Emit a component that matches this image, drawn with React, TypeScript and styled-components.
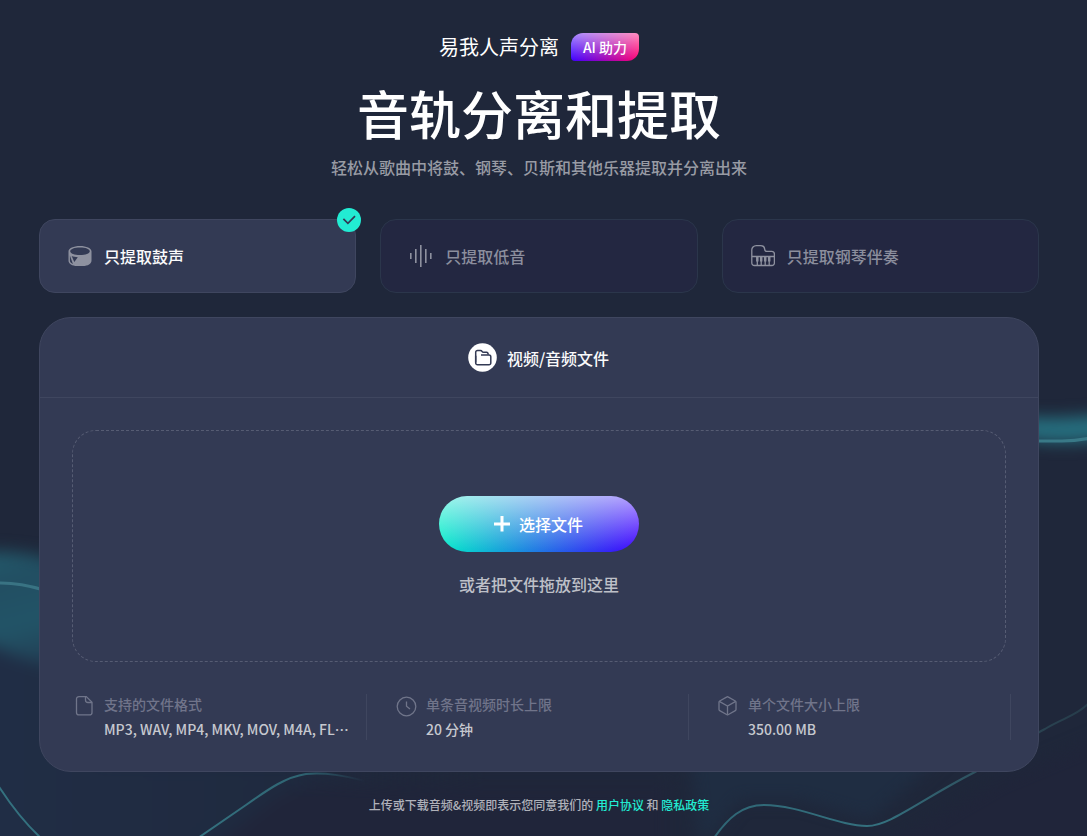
import React, { useState } from "react";
import styled, { createGlobalStyle } from "styled-components";

const GlobalStyle = createGlobalStyle`
  *, *::before, *::after { box-sizing: border-box; }
  html, body { margin: 0; padding: 0; background: #1f273a; }
  body {
    font-family: "Noto Sans CJK SC", "Noto Sans", sans-serif;
    color: #fff;
  }
  h1, h2, p, dl, dt, dd, fieldset { margin: 0; padding: 0; border: 0; font-weight: inherit; }
  button { font-family: inherit; }
`;

const Page = styled.div`
  position: relative;
  min-height: 100vh;
  overflow: hidden;
  padding: 32px 9px 16px 0;
`;

const Backdrop = styled.svg`
  position: absolute;
  inset: 0;
  width: 100%;
  height: 100%;
`;

const Main = styled.main`
  position: relative;
  width: calc(100% - 32px);
  max-width: 1000px;
  margin: 0 auto;
`;

const Header = styled.header`
  display: flex;
  flex-direction: column;
  align-items: center;
  text-align: center;
`;

const Brand = styled.div`
  display: flex;
  align-items: center;
  gap: 12px;
  font-size: 20px;
  line-height: 30px;
`;

const Badge = styled.span`
  padding: 0 12px;
  border-radius: 12px 4px 12px 4px;
  font-size: 14px;
  font-weight: 500;
  line-height: 28px;
  background:
    linear-gradient(180deg, rgba(255, 255, 255, 0.56), rgba(255, 255, 255, 0)),
    linear-gradient(90deg, #3d00ff, #ff0070);
`;

const Title = styled.h1`
  margin-top: 16px;
  font-size: 52px;
  font-weight: 500;
  line-height: 70px;
`;

const Subtitle = styled.p`
  margin-top: 7px;
  font-size: 16px;
  font-weight: 500;
  line-height: 24px;
  color: #989ba4;
`;

const Modes = styled.fieldset`
  display: grid;
  grid-template-columns: repeat(3, 1fr);
  gap: 24px;
  margin-top: 40px;
  min-width: 0;
`;

const ModeCard = styled.label<{ $active: boolean }>`
  position: relative;
  display: flex;
  align-items: center;
  gap: 12px;
  height: 74px;
  padding: 0 28px;
  border: 1px solid ${(p) => (p.$active ? "#3f465f" : "#2b364b")};
  border-radius: 16px;
  background: ${(p) => (p.$active ? "#333a54" : "#232741")};
  color: ${(p) => (p.$active ? "#fafafb" : "#8b8e9d")};
  font-size: 16px;
  font-weight: 500;
  line-height: 24px;
  cursor: pointer;
`;

const HiddenRadio = styled.input`
  position: absolute;
  inset: 0;
  width: 100%;
  height: 100%;
  margin: 0;
  opacity: 0;
  cursor: pointer;
`;

const ModeIcon = styled.svg`
  flex: none;
  width: 24px;
  height: 24px;
  color: #8e919f;
`;

const Check = styled.svg`
  position: absolute;
  top: -12px;
  right: -6px;
  width: 24px;
  height: 24px;
`;

const Panel = styled.section`
  margin-top: 24px;
  padding-bottom: 31px;
  border: 1px solid #3f465f;
  border-radius: 32px;
  background: #333a54;
`;

const PanelHead = styled.div`
  display: flex;
  align-items: center;
  justify-content: center;
  gap: 10px;
  height: 80px;
  padding-right: 1px;
  border-bottom: 1px solid #3f465f;
`;

const PanelTitle = styled.h2`
  font-size: 16px;
  font-weight: 500;
  line-height: 24px;
  color: #fafafb;
`;

const DropZone = styled.div`
  display: flex;
  flex-direction: column;
  align-items: center;
  justify-content: center;
  gap: 20px;
  min-height: 232px;
  margin: 32px;
  border: 1px dashed #565c73;
  border-radius: 24px;
`;

const PickButton = styled.button`
  display: flex;
  align-items: center;
  justify-content: center;
  gap: 8px;
  width: 200px;
  height: 56px;
  padding: 0 2px 0 0;
  border: 0;
  border-radius: 28px;
  color: #fff;
  font-size: 16px;
  font-weight: 500;
  line-height: 24px;
  cursor: pointer;
  background:
    linear-gradient(180deg, rgba(255, 255, 255, 0.62), rgba(255, 255, 255, 0)),
    linear-gradient(90deg, #00ecc8, #3d00ff);
`;

const DropHint = styled.p`
  font-size: 16px;
  font-weight: 500;
  line-height: 24px;
  color: #bec0c8;
`;

const Limits = styled.dl`
  display: grid;
  grid-template-columns: repeat(3, 1fr);
  gap: 27px;
  padding: 0 27px 0 32px;
`;

const Limit = styled.div`
  display: grid;
  grid-template-columns: 24px minmax(0, 1fr);
  column-gap: 8px;
  row-gap: 4px;
  padding-right: 16px;
  border-right: 1px solid #3f465f;
`;

const LimitIcon = styled.svg`
  grid-row: 1 / span 2;
  width: 24px;
  height: 24px;
  color: #70758a;
`;

const LimitName = styled.dt`
  font-size: 14px;
  font-weight: 500;
  line-height: 20px;
  color: #70748a;
`;

const LimitValue = styled.dd`
  grid-column: 2;
  font-size: 14px;
  font-weight: 500;
  line-height: 22px;
  color: #c6c8cf;
  white-space: nowrap;
`;

const Terms = styled.p`
  margin-top: 24px;
  font-size: 12px;
  font-weight: 500;
  line-height: 18px;
  text-align: center;
  color: #b0b2ba;
`;

const TermsLink = styled.a`
  color: #22ecd3;
  text-decoration: none;
`;

const DrumIcon = () => (
  <ModeIcon viewBox="0 0 24 24" fill="none" aria-hidden="true">
    <path fill="currentColor" fillRule="evenodd" d="M12 2C5.600 2 .5 4.300 .5 7.200V16.500C.5 19.800 4.200 22 9 22H15C19.800 22 23.500 19.800 23.500 16.500V7.200C23.500 4.300 18.400 2 12 2ZM12 3.400C17.500 3.400 21.800 5 21.800 7.200S17.500 11 12 11 2.200 9.400 2.200 7.200 6.500 3.400 12 3.400ZM1.900 11.500V16.500C1.900 18 3 19.300 4.900 20ZM3.700 12L6.300 18L9.800 13.300C7.500 13 5.300 12.600 3.700 12Z" />
  </ModeIcon>
);

const BassIcon = () => (
  <ModeIcon viewBox="0 0 24 24" fill="none" aria-hidden="true">
    <path stroke="currentColor" strokeWidth="1.600" d="M1.800 9V15M6.800 5V19M11.800 1V23M16.800 5V19M21.800 9V15" />
  </ModeIcon>
);

const PianoIcon = () => (
  <ModeIcon viewBox="0 0 24 24" fill="none" stroke="currentColor" strokeWidth="1.300" aria-hidden="true">
    <path d="M.8 19V6.500A4.500 4.500 0 0 1 5.300 1.600H9.500C12 1.600 13.500 3.300 13.700 5.300C13.900 6.800 14.700 7.400 16 7.400H20.700A2.700 2.700 0 0 1 23.400 10.100V19A2.500 2.500 0 0 1 20.900 21.500H3.300A2.500 2.500 0 0 1 .8 19ZM.8 12.500H23.400" />
    <path d="M6.300 17V21.500M10.200 17V21.500M14.200 17V21.500M18.200 17V21.500" />
    <path strokeWidth="2.500" d="M6.300 12.500V17.500M10.200 12.500V17.500M14.200 12.500V17.500M18.200 12.500V17.500" />
  </ModeIcon>
);

const modes = [
  { id: "drums", label: "只提取鼓声", Icon: DrumIcon },
  { id: "bass", label: "只提取低音", Icon: BassIcon },
  { id: "piano", label: "只提取钢琴伴奏", Icon: PianoIcon },
];

const limits = [
  {
    name: "支持的文件格式",
    value: "MP3, WAV, MP4, MKV, MOV, M4A, FL…",
    icon: (
      <>
        <path d="M14.300 2.600H7A2.500 2.500 0 0 0 4.500 5.100V18.400A2.500 2.500 0 0 0 7 20.900H17.500A2.500 2.500 0 0 0 20 18.400V8.300Z" />
        <path d="M13.500 2.600V6A2.500 2.500 0 0 0 16 8.500H20" />
      </>
    ),
  },
  {
    name: "单条音视频时长上限",
    value: "20 分钟",
    icon: (
      <>
        <circle cx="12.500" cy="12.500" r="9.300" />
        <path d="M12.500 7.500V12.200L16 15" />
      </>
    ),
  },
  {
    name: "单个文件大小上限",
    value: "350.00 MB",
    icon: (
      <>
        <path d="M11 2.900Q11.500 2.600 12 2.900L19.300 7Q20 7.400 20 8.100V15.500Q20 16.200 19.300 16.600L12 20.700Q11.500 21 11 20.700L3.700 16.600Q3 16.200 3 15.500V8.100Q3 7.400 3.700 7Z" />
        <path d="M3.300 7.400L11.500 12L19.700 7.400M11.500 12V20.800" />
      </>
    ),
  },
];

const Waves = () => (
  <Backdrop viewBox="0 0 1087 836" preserveAspectRatio="xMidYMid slice" aria-hidden="true" fill="none">
    <defs>
      <filter id="soft" x="-50%" y="-50%" width="200%" height="200%" colorInterpolationFilters="sRGB">
        <feGaussianBlur stdDeviation="8" />
      </filter>
      <linearGradient id="glow" x1="0" y1="545" x2="36" y2="680" gradientUnits="userSpaceOnUse">
        <stop offset="0" stopColor="#235f6f" />
        <stop offset="0.250" stopColor="#224e62" />
        <stop offset="0.600" stopColor="#225467" />
        <stop offset="1" stopColor="#21384f" />
      </linearGradient>
      <linearGradient id="mist" x1="0" y1="0" x2="480" y2="0" gradientUnits="userSpaceOnUse">
        <stop offset="0" stopColor="#202d45" />
        <stop offset="0.600" stopColor="#1f2a3f" />
        <stop offset="1" stopColor="#1f273a" stopOpacity="0" />
      </linearGradient>
      <linearGradient id="hill" x1="200" y1="0" x2="365" y2="0" gradientUnits="userSpaceOnUse">
        <stop offset="0" stopColor="#34717f" />
        <stop offset="0.600" stopColor="#2f6573" />
        <stop offset="1" stopColor="#2f6573" stopOpacity="0" />
      </linearGradient>
      <linearGradient id="swell" x1="715" y1="0" x2="1087" y2="0" gradientUnits="userSpaceOnUse">
        <stop offset="0" stopColor="#2f6675" />
        <stop offset="0.450" stopColor="#34717f" />
        <stop offset="0.750" stopColor="#2d4a58" />
        <stop offset="1" stopColor="#263c4a" />
      </linearGradient>
    </defs>
    <g filter="url(#soft)">
      <path fill="url(#mist)" d="M-40 640H60L100 760H480V870H-40Z" />
      <path fill="#1f2d42" d="M690 750H950L870 820L800 800H740L700 850Z" />
      <path fill="#20253a" d="M210 850L280 795L320 785H670V850Z" />
      <path fill="#20253a" d="M880 850L1000 780L1120 730V870Z" />
      <path fill="url(#glow)" d="M-30 553Q20 548 60 562V668Q20 662 -30 634Z" />
      <path fill="#267080" d="M1020 417Q1060 420 1110 414V438Q1060 446 1020 438Z" />
    </g>
    <path stroke="#397383" strokeWidth="3" d="M-4 583Q18 582 44 590" />
    <path stroke="#397987" strokeWidth="3" d="M1034 441H1062Q1076 441 1090 438" />
    <path stroke="#34717f" strokeWidth="2" d="M-4 782Q18 817 42 839" />
    <path stroke="url(#hill)" strokeWidth="2" d="M198 838L246 805C270 788 286 777 306 774C326 772 345 776 365 781" />
    <path stroke="url(#swell)" strokeWidth="2" d="M714 838C728 818 742 805 764 805C800 805 838 826 867 826C890 826 920 800 975 772C1010 753 1030 736 1045 729C1063 718 1076 716 1088 704" />
  </Backdrop>
);

export default function App() {
  const [mode, setMode] = useState("drums");

  return (
    <>
      <GlobalStyle />
      <Page lang="zh-CN">
        <Waves />
        <Main>
          <Header>
            <Brand>
              易我人声分离
              <Badge>AI 助力</Badge>
            </Brand>
            <Title>音轨分离和提取</Title>
            <Subtitle>轻松从歌曲中将鼓、钢琴、贝斯和其他乐器提取并分离出来</Subtitle>
          </Header>

          <Modes aria-label="提取模式">
            {modes.map(({ id, label, Icon }) => (
              <ModeCard key={id} $active={mode === id}>
                <HiddenRadio type="radio" name="mode" value={id} checked={mode === id} onChange={() => setMode(id)} />
                <Icon />
                {label}
                {mode === id && (
                  <Check viewBox="0 0 24 24" fill="none" aria-hidden="true">
                    <circle cx="12" cy="12" r="12" fill="#22ecd3" />
                    <path stroke="#333a54" strokeWidth="1.700" d="M6.400 10.800L10.900 15.300L18 8.200" />
                  </Check>
                )}
              </ModeCard>
            ))}
          </Modes>

          <Panel>
            <PanelHead>
              <svg width="29" height="29" viewBox="0 0 29 29" fill="none" aria-hidden="true">
                <circle cx="14.500" cy="14.500" r="14.300" fill="#fff" />
                <g stroke="#333a54" strokeWidth="1.500">
                  <path d="M7.700 19.500V9.200A1.800 1.800 0 0 1 9.500 7.400H12.500Q13.500 7.400 14 8.300Q14.500 9.300 15.700 9.300H18.600Q20 9.300 20.300 11.700" />
                  <path d="M7.700 12.800V20A1.800 1.800 0 0 0 9.500 21.800H21A1.800 1.800 0 0 0 22.800 20V13.800A1.800 1.800 0 0 0 21 12H13" />
                </g>
              </svg>
              <PanelTitle>视频/音频文件</PanelTitle>
            </PanelHead>

            <DropZone>
              <PickButton type="button">
                <svg width="18" height="18" viewBox="0 0 18 18" aria-hidden="true">
                  <path fill="#fff" d="M7.500 1H10.500V7.500H17V10.500H10.500V16.500H7.500V10.500H1V7.500H7.500Z" />
                </svg>
                选择文件
              </PickButton>
              <DropHint>或者把文件拖放到这里</DropHint>
            </DropZone>

            <Limits>
              {limits.map(({ name, value, icon }) => (
                <Limit key={name}>
                  <LimitIcon viewBox="0 0 24 24" fill="none" stroke="currentColor" strokeWidth="1.300" aria-hidden="true">
                    {icon}
                  </LimitIcon>
                  <LimitName>{name}</LimitName>
                  <LimitValue>{value}</LimitValue>
                </Limit>
              ))}
            </Limits>
          </Panel>

          <Terms>
            上传或下载音频&amp;视频即表示您同意我们的 <TermsLink href="#agreement">用户协议</TermsLink> 和{" "}
            <TermsLink href="#privacy">隐私政策</TermsLink>
          </Terms>
        </Main>
      </Page>
    </>
  );
}
